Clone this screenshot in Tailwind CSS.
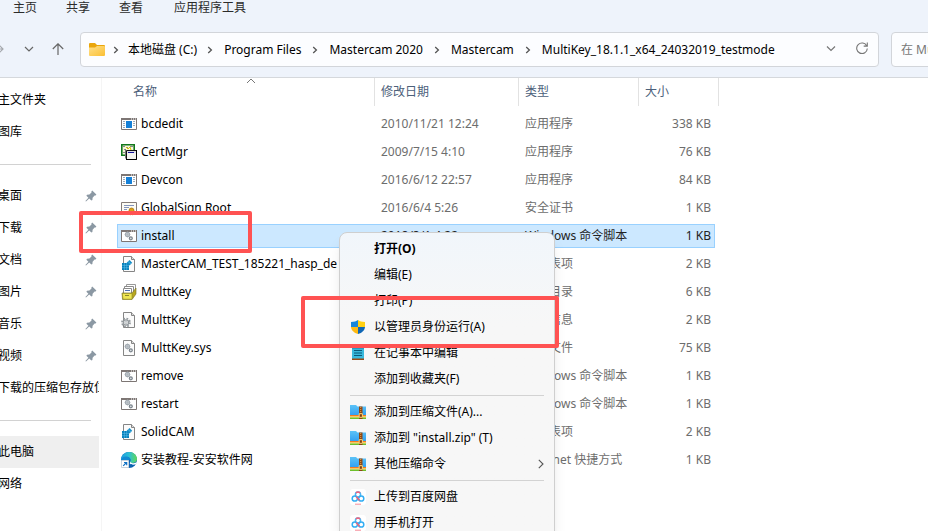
<!DOCTYPE html>
<html lang="zh-CN">
<head>
<meta charset="utf-8">
<title>MultiKey_18.1.1_x64_24032019_testmode</title>
<script src="https://cdn.jsdelivr.net/npm/@tailwindcss/browser@4"></script>
</head>
<body class="font-['Noto_Sans','Noto_Sans_CJK_SC',sans-serif] text-xs text-black bg-white">
<svg class="absolute size-0" aria-hidden="true">
  <defs>
    <linearGradient id="gFolder" x1="0" y1="0" x2="1" y2="1"><stop offset="0" stop-color="#ffe08a"/><stop offset="1" stop-color="#fbbf33"/></linearGradient>
    <linearGradient id="gZip" x1="0" y1="0" x2="0" y2="1"><stop offset="0" stop-color="#5cc3f7"/><stop offset="1" stop-color="#2f9df0"/></linearGradient>
    <linearGradient id="gEdge" x1="0" y1="0" x2="1" y2="0"><stop offset="0" stop-color="#1b9de2"/><stop offset=".5" stop-color="#2cc0d4"/><stop offset="1" stop-color="#62d957"/></linearGradient>
    <symbol id="chev" viewBox="0 0 6 8"><path d="M1.2 1 4.4 4 1.2 7" fill="none" stroke="#555" stroke-width="1.3"/></symbol>
    <symbol id="pin" viewBox="0 0 12 12"><path d="M7.2.6 11.4 4.4 10.6 5.6 9.6 5.5 7.6 7.8 7.4 10 6.4 10.6 4.2 8.6 1 11.6.4 11 3.4 7.8 1.4 5.8 2 4.8 4.4 4.6 6.5 2.5 6.4 1.4Z" fill="#8b98a3"/></symbol>
    <symbol id="app" viewBox="0 0 16 16"><path d="M.5 2.500h15v11H.5z" fill="#fff" stroke="#7d7674"/><path d="M0 2h16v2H0z" fill="#7d7674"/><path d="M10 3h1M12 3h1M14 3h1" stroke="#fff"/><path d="M5 5h6v7H5z" fill="#1580d8"/><path d="M2 5.500h2M2 7.500h2M2 9.500h2M2 11.500h2M12 5.500h2M12 7.500h2M12 9.500h2" stroke="#9cabb8"/></symbol>
    <symbol id="cert" viewBox="0 0 16 16"><path d="M.8.8h12.400v10.400H.8z" fill="#f6f6d8" stroke="#11771c" stroke-width="1.600"/><path d="M2 2.500h2M5 3.500h2M9 2.500h3M3 5.500h2M2 8.500h2" stroke="#888"/><path d="M5 3l2 2 2-2 1 3" stroke="#d9c400" fill="none"/><path d="M5.500 6.500h10v9h-10z" fill="#f4f4f0" stroke="#111"/><path d="M6 7h9v2H6z" fill="#dcdce4"/><path d="M7 8.500h6" stroke="#14149a"/><path d="M15.500 6v9.500H5" stroke="#000" fill="none"/><path d="M4.500 5v9.500" stroke="#777"/></symbol>
    <symbol id="security" viewBox="0 0 16 16"><path d="M.5 2.500h15v11H.5z" fill="#fdfcf4" stroke="#857d79"/><path d="M3 5.500h10M3 7.500h5M3 9.500h3" stroke="#8495bd"/><circle cx="10.500" cy="10.500" r="2.500" fill="#dda016" stroke="#a06d00" stroke-width=".7"/><path d="M9 12.500v3l1.500-1 1.500 1v-3" fill="#d7a125"/></symbol>
    <symbol id="gears" viewBox="0 0 16 16"><circle cx="6.500" cy="6.500" r="2" fill="#e8ecef" stroke="#a3abb2" stroke-width="1.300"/><path d="M6.500 3.500v6M3.500 6.500h6" stroke="#a3abb2" stroke-width=".6"/><circle cx="9.800" cy="10.300" r="1.500" fill="#d8dde0" stroke="#7a838b" stroke-width="1.200"/></symbol>
    <symbol id="batch" viewBox="0 0 16 16"><path d="M.5 2.500h15v11H.5z" fill="#fff" stroke="#7d7674"/><path d="M0 2h16v2H0z" fill="#7d7674"/><path d="M10 3h1M12 3h1M14 3h1" stroke="#fff"/><use href="#gears"/></symbol>
    <symbol id="page" viewBox="0 0 16 16"><path d="M2.500.5h8l3 3v12h-11z" fill="#fbfbfb" stroke="#858585"/><path d="M10.500.5v3h3" fill="#ddd" stroke="#858585"/></symbol>
    <symbol id="reg" viewBox="0 0 16 16"><use href="#page"/><path d="M1 7h7v7H1z" fill="#087fba"/><path d="M1 9.400h7M1 11.700h7M3.400 7v7M5.700 7v7" stroke="#64c5ee" stroke-width=".5"/><path d="m8.500 4 2.700 2.800L8.500 9.500 5.700 6.800z" fill="#168dc7"/><path d="M7 5.400 10 8.200" stroke="#73cdf1" stroke-width=".6"/></symbol>
    <symbol id="catalog" viewBox="0 0 16 16"><path d="M5.500.5h9v8h-9z" fill="#fff" stroke="#999"/><path d="M3.500 2.500h9v7h-9z" fill="#fff" stroke="#8b8b8b"/><path d="M2.500 4.500h8v6h-8z" fill="#fff" stroke="#8b8b8b"/><path d="M4 6.500h5" stroke="#4e71b8"/><path d="M1 9h10l4-5v6l-4 5.500H1.500z" fill="#b7a61f" stroke="#77712a" stroke-width=".6"/><path d="M1.300 9.400h9.700v5.800H2z" fill="#eee552" stroke="#8b862c" stroke-width=".6"/><path d="M4 11.500h4" stroke="#8b862c"/></symbol>
    <symbol id="inf" viewBox="0 0 16 16"><use href="#page"/><circle cx="5" cy="10.500" r="4" fill="none" stroke="#949a9e" stroke-width="1.800" stroke-dasharray="1.700 1.440"/><circle cx="5" cy="10.500" r="2.700" fill="#e8eaeb" stroke="#949a9e" stroke-width="1.200"/><circle cx="5" cy="10.500" r="1" fill="#fff" stroke="#949a9e" stroke-width=".6"/></symbol>
    <symbol id="sys" viewBox="0 0 16 16"><use href="#page"/><use href="#gears"/></symbol>
    <symbol id="edge" viewBox="0 0 16 16"><circle cx="8" cy="8" r="8" fill="#0b61b0"/><path d="M0 7C.5 3 4 0 8 0c5 0 8 3.500 8 7 0 3-2.500 4.200-5 4-2 0-2-1-1.500-2C10 7 8.500 5 6 5 3 5 1 6 0 9z" fill="url(#gEdge)"/><path d="M0 8c1-3 3.500-4 6-3.500C8 5 9.500 6 9.500 8 7 7 6 10 7 12l-7 0z" fill="#128ad2"/><path d="M9.700 9c-.7 1.500 1 2.500 3 2.200 1.500-.2 2.500-.7 3.300-1.500l-.8 2.300c-2 1-5 1-6.500-.5z" fill="#fff"/><path d="M.5 8.500h7v7h-7z" fill="#fff" stroke="#c9d3dc"/><path d="M2.200 13.800 5.500 10.500M3 10.500h2.700v2.700" fill="none" stroke="#1272c4" stroke-width="1.200"/></symbol>
    <symbol id="shield" viewBox="0 0 14 14"><path d="M7 0C5.500 1.200 3 2 0 2v5h7z" fill="#1485dc"/><path d="M7 0c1.500 1.200 4 2 7 2v5H7z" fill="#ffd013"/><path d="M0 7c.3 3.500 3 5.800 7 7V7z" fill="#fdb913"/><path d="M14 7c-.3 3.500-3 5.800-7 7V7z" fill="#0f67b5"/></symbol>
    <symbol id="notepad" viewBox="0 0 14 14"><path d="M1 1h12v12H1z" fill="#39b9dc"/><path d="M1 1h12v1.500H1z" fill="#197fa8"/><path d="M3 4.500h8M3 7h8M3 9.500h8" stroke="#0b5878"/><path d="M1 12.500h12V14H1z" fill="#9a4a13"/></symbol>
    <symbol id="zip" viewBox="0 0 16 14"><path d="M0 0h6l1.500 1.500H16V11H0z" fill="url(#gZip)"/><path d="M0 10h16v1.500H0z" fill="#f47b20"/><path d="M0 11.500h16V12.500H0z" fill="#ffd23a"/><path d="M0 12.500h16V14H0z" fill="#6dbf2b"/><path d="M9 1.500h3.500V14H9z" fill="#8d4513"/><path d="M10.700 2v7" stroke="#e6a24b" stroke-dasharray="1 1"/><path d="M9.200 8.700h3.200v3.600H9.200z" fill="#7a3d12" stroke="#ffd87a"/></symbol>
    <symbol id="pan" viewBox="0 0 16 16"><rect width="16" height="16" rx="3" fill="#fff"/><circle cx="8" cy="5.500" r="2.600" fill="none" stroke="#4cb7f5" stroke-width="1.500"/><path d="M6 4a2.600 2.600 0 0 1 4 0" fill="none" stroke="#f2617a" stroke-width="1.500"/><circle cx="4.800" cy="9.500" r="2.600" fill="none" stroke="#33aef3" stroke-width="1.500"/><circle cx="11.200" cy="9.500" r="2.600" fill="none" stroke="#33aef3" stroke-width="1.500"/><path d="M6.300 7.400 9.600 11.400" stroke="#f2617a" stroke-width="1.500"/><path d="M5 15.200h6" stroke="#f58a97"/></symbol>
  </defs>
</svg>

<div class="relative flex h-screen flex-col overflow-hidden">
  <header class="border-b border-[#d5d8dc] bg-[#eef3fb]">
    <nav class="flex h-8 gap-[29px] pl-[13px] text-[#2b2b2b]">
      <button class="h-4 leading-4">主页</button>
      <button class="h-4 leading-4">共享</button>
      <button class="h-4 leading-4">查看</button>
      <button class="ml-0.5 h-4 leading-4">应用程序工具</button>
    </nav>
    <div class="flex h-[45px] items-start">
      <div class="flex h-[34px] w-20 shrink-0 items-center">
        <button aria-label="前进" class="-ml-2"><svg class="size-3" viewBox="0 0 12 12"><path d="M0 6h11M6.500 1.500 11 6l-4.500 4.500" fill="none" stroke="#a5a8ad" stroke-width="1.200"/></svg></button>
        <button aria-label="最近" class="ml-5"><svg class="h-2 w-2.5" viewBox="0 0 10 8"><path d="m1 2 4 4 4-4" fill="none" stroke="#666" stroke-width="1.200"/></svg></button>
        <button aria-label="上移" class="ml-[18px]"><svg class="size-3" viewBox="0 0 12 12"><path d="M6 12V.8M.8 6 6 .8 11.200 6" fill="none" stroke="#666" stroke-width="1.200"/></svg></button>
      </div>
      <div class="flex h-[35px] grow items-center rounded border border-[#d2d5da] bg-[#fcfdff] pl-2">
        <svg class="h-[13px] w-4" viewBox="0 0 16 13"><path d="M0 1q0-1 1-1h5l2 2h7q1 0 1 1v3H0z" fill="#eaa60c"/><path d="M0 4.500h6L8 3h7q1 0 1 1v8q0 1-1 1H1q-1 0-1-1z" fill="url(#gFolder)"/></svg>
        <svg class="mr-[9px] ml-2 h-2 w-1.5"><use href="#chev"/></svg>
        <a href="#">本地磁盘 (C:)</a>
        <svg class="mr-[11px] ml-2.5 h-2 w-1.5"><use href="#chev"/></svg>
        <a href="#">Program Files</a>
        <svg class="mx-[11px] h-2 w-1.5"><use href="#chev"/></svg>
        <a href="#">Mastercam 2020</a>
        <svg class="mx-[11px] h-2 w-1.5"><use href="#chev"/></svg>
        <a href="#">Mastercam</a>
        <svg class="mx-[11px] h-2 w-1.5"><use href="#chev"/></svg>
        <a href="#">MultiKey_18.1.1_x64_24032019_testmode</a>
        <button aria-label="历史" class="ml-auto"><svg class="h-2 w-2.5" viewBox="0 0 10 8"><path d="m1 .5 4 4 4-4" fill="none" stroke="#777" stroke-width="1.200"/></svg></button>
        <button aria-label="刷新" class="mr-2.5 mb-1 ml-5"><svg class="size-3" viewBox="0 0 12 12"><path d="M10.800 4A5.300 5.300 0 1 0 11.300 6.500M11.300.5v3.600H7.700" fill="none" stroke="#777" stroke-width="1.100"/></svg></button>
      </div>
      <div class="ml-3 w-[37px] shrink-0">
        <input aria-label="搜索" placeholder="在 Mu" class="h-[35px] w-48 rounded border border-[#d2d5da] bg-[#fcfdff] pl-[9px] text-xs placeholder:text-[#777]">
      </div>
    </div>
  </header>

  <main class="flex min-h-0 grow">
    <aside class="w-[102px] shrink-0 overflow-hidden border-r border-[#f5f5f5] pt-1.5 pr-0.5">
      <ul class="leading-8 whitespace-nowrap">
        <li class="h-8"><a href="#" class="-ml-0.5">主文件夹</a></li>
        <li class="h-8"><a href="#" class="-ml-0.5">图库</a></li>
        <li class="flex h-8 items-center pr-2"><hr class="w-full border-[#d2d2d2]"></li>
        <li class="flex h-8 items-center justify-between pr-0.5"><a href="#" class="-ml-0.5">桌面</a><svg class="size-3"><use href="#pin"/></svg></li>
        <li class="flex h-8 items-center justify-between pr-0.5"><a href="#" class="-ml-0.5">下载</a><svg class="size-3"><use href="#pin"/></svg></li>
        <li class="flex h-8 items-center justify-between pr-0.5"><a href="#" class="-ml-0.5">文档</a><svg class="size-3"><use href="#pin"/></svg></li>
        <li class="flex h-8 items-center justify-between pr-0.5"><a href="#" class="-ml-0.5">图片</a><svg class="size-3"><use href="#pin"/></svg></li>
        <li class="flex h-8 items-center justify-between pr-0.5"><a href="#" class="-ml-0.5">音乐</a><svg class="size-3"><use href="#pin"/></svg></li>
        <li class="flex h-8 items-center justify-between pr-0.5"><a href="#" class="-ml-0.5">视频</a><svg class="size-3"><use href="#pin"/></svg></li>
        <li class="h-8 overflow-hidden"><a href="#" class="-ml-0.5">下载的压缩包存放位</a></li>
        <li class="flex h-8 items-center pr-2"><hr class="w-full border-[#d2d2d2]"></li>
        <li class="h-8 bg-[#efefef]"><a href="#" class="-ml-0.5">此电脑</a></li>
        <li class="h-8"><a href="#" class="-ml-0.5">网络</a></li>
      </ul>
    </aside>

    <section class="relative grow">
      <svg class="absolute top-0 left-[144px] h-1.5 w-2.5" viewBox="0 0 10 6"><path d="m1 5 4-4 4 4" fill="none" stroke="#777"/></svg>
      <table class="ml-[15px] w-[602px] table-fixed border-separate border-spacing-0 whitespace-nowrap text-[#6d6d6d]">
        <colgroup><col class="w-[258px]"><col class="w-36"><col class="w-[120px]"><col class="w-20"></colgroup>
        <thead class="text-left text-[#4c607a]">
          <tr class="h-7">
            <th class="border-r border-[#e2e2e2] pl-4 font-normal">名称</th>
            <th class="border-r border-[#e2e2e2] pl-1.5 font-normal">修改日期</th>
            <th class="border-r border-[#e2e2e2] pl-1.5 font-normal">类型</th>
            <th class="border-r border-[#e2e2e2] pl-1.5 font-normal">大小</th>
          </tr>
          <tr class="h-1"></tr>
        </thead>
        <tbody>
          <tr class="h-7"><td><div class="flex items-center gap-1 pl-1 text-black"><svg class="size-4"><use href="#app"/></svg>bcdedit</div></td><td class="pl-1.5">2010/11/21 12:24</td><td class="pl-1.5">应用程序</td><td class="pr-2 text-right">338 KB</td></tr>
          <tr class="h-7"><td><div class="flex items-center gap-1 pl-1 text-black"><svg class="size-4"><use href="#cert"/></svg>CertMgr</div></td><td class="pl-1.5">2009/7/15 4:10</td><td class="pl-1.5">应用程序</td><td class="pr-2 text-right">76 KB</td></tr>
          <tr class="h-7"><td><div class="flex items-center gap-1 pl-1 text-black"><svg class="size-4"><use href="#app"/></svg>Devcon</div></td><td class="pl-1.5">2016/6/12 22:57</td><td class="pl-1.5">应用程序</td><td class="pr-2 text-right">84 KB</td></tr>
          <tr class="h-7"><td><div class="flex items-center gap-1 pl-1 text-black"><svg class="size-4"><use href="#security"/></svg>GlobalSign Root</div></td><td class="pl-1.5">2016/6/4 5:26</td><td class="pl-1.5">安全证书</td><td class="pr-2 text-right">1 KB</td></tr>
          <tr class="h-7 text-[#222]">
            <td><div class="flex h-6 items-center gap-1 border-y border-l border-[#99d1ff] bg-[#cce8ff] pl-[3px] text-black"><svg class="size-4"><use href="#batch"/></svg>install</div></td>
            <td><div class="h-6 border-y border-[#99d1ff] bg-[#cce8ff] pl-1.5 leading-[22px]">2018/3/1 4:22</div></td>
            <td><div class="h-6 border-y border-[#99d1ff] bg-[#cce8ff] pl-1.5 leading-[22px]">Windows 命令脚本</div></td>
            <td><div class="mr-1 h-6 border-y border-r border-[#99d1ff] bg-[#cce8ff] pr-[3px] text-right leading-[22px]">1 KB</div></td>
          </tr>
          <tr class="h-7"><td><div class="flex items-center gap-1 pl-1 text-black"><svg class="size-4 shrink-0"><use href="#reg"/></svg>MasterCAM_TEST_185221_hasp_de</div></td><td></td><td class="pl-1.5">注册表项</td><td class="pr-2 text-right">2 KB</td></tr>
          <tr class="h-7"><td><div class="flex items-center gap-1 pl-1 text-black"><svg class="size-4"><use href="#catalog"/></svg>MulttKey</div></td><td></td><td class="pl-1.5">安全目录</td><td class="pr-2 text-right">6 KB</td></tr>
          <tr class="h-7"><td><div class="flex items-center gap-1 pl-1 text-black"><svg class="size-4"><use href="#inf"/></svg>MulttKey</div></td><td></td><td class="pl-1.5">安装信息</td><td class="pr-2 text-right">2 KB</td></tr>
          <tr class="h-7"><td><div class="flex items-center gap-1 pl-1 text-black"><svg class="size-4"><use href="#sys"/></svg>MulttKey.sys</div></td><td></td><td class="pl-1.5">系统文件</td><td class="pr-2 text-right">75 KB</td></tr>
          <tr class="h-7"><td><div class="flex items-center gap-1 pl-1 text-black"><svg class="size-4"><use href="#batch"/></svg>remove</div></td><td></td><td class="pl-1.5">Windows 命令脚本</td><td class="pr-2 text-right">1 KB</td></tr>
          <tr class="h-7"><td><div class="flex items-center gap-1 pl-1 text-black"><svg class="size-4"><use href="#batch"/></svg>restart</div></td><td></td><td class="pl-1.5">Windows 命令脚本</td><td class="pr-2 text-right">1 KB</td></tr>
          <tr class="h-7"><td><div class="flex items-center gap-1 pl-1 text-black"><svg class="size-4"><use href="#reg"/></svg>SolidCAM</div></td><td></td><td class="pl-1.5">注册表项</td><td class="pr-2 text-right">2 KB</td></tr>
          <tr class="h-7"><td><div class="flex items-center gap-1 pl-1 text-black"><svg class="size-4"><use href="#edge"/></svg>安装教程-安安软件网</div></td><td></td><td class="pl-1.5">Internet 快捷方式</td><td class="pr-2 text-right">1 KB</td></tr>
        </tbody>
      </table>
    </section>
  </main>

  <div role="menu" class="absolute top-[232px] left-[339px] w-[216px] rounded-t-lg border border-[#cfcfcf] bg-linear-to-b from-[#f1f6fb] to-[#f7f7f7] to-30% pt-[3px] shadow-lg">
    <button role="menuitem" class="flex h-[26px] w-full items-center pl-[34px] font-bold">打开(O)</button>
    <button role="menuitem" class="flex h-[26px] w-full items-center pl-[34px]">编辑(E)</button>
    <button role="menuitem" class="flex h-[26px] w-full items-center pl-[34px]">打印(P)</button>
    <button role="menuitem" class="flex h-[26px] w-full items-center gap-2 pl-2.5"><span class="flex w-4 justify-center"><svg class="size-3.5"><use href="#shield"/></svg></span>以管理员身份运行(A)</button>
    <button role="menuitem" class="flex h-[26px] w-full items-center gap-2 pl-2.5"><span class="flex w-4 justify-center"><svg class="size-3.5"><use href="#notepad"/></svg></span>在记事本中编辑</button>
    <button role="menuitem" class="flex h-[26px] w-full items-center pl-[34px]">添加到收藏夹(F)</button>
    <hr class="mx-2.5 my-[3px] border-[#d3d3d3]">
    <button role="menuitem" class="flex h-[26px] w-full items-center gap-2 pl-2.5"><svg class="h-3.5 w-4"><use href="#zip"/></svg>添加到压缩文件(A)...</button>
    <button role="menuitem" class="flex h-[26px] w-full items-center gap-2 pl-2.5"><svg class="h-3.5 w-4"><use href="#zip"/></svg>添加到 "install.zip" (T)</button>
    <button role="menuitem" class="flex h-[26px] w-full items-center gap-2 pr-2.5 pl-2.5"><svg class="h-3.5 w-4"><use href="#zip"/></svg>其他压缩命令<svg class="ml-auto h-2.5 w-1.5" viewBox="0 0 6 10"><path d="m.8.8 4.200 4.200L.8 9.200" fill="none" stroke="#555" stroke-width="1.100"/></svg></button>
    <hr class="mx-2.5 my-[3px] border-[#d3d3d3]">
    <button role="menuitem" class="flex h-[26px] w-full items-center gap-2 pl-2.5"><svg class="size-4"><use href="#pan"/></svg>上传到百度网盘</button>
    <button role="menuitem" class="flex h-[26px] w-full items-center gap-2 pl-2.5"><svg class="size-4"><use href="#pan"/></svg>用手机打开</button>
  </div>

  <div class="pointer-events-none absolute top-[211px] left-[79px] h-[42px] w-[173px] rounded-xs border-4 border-[#ff5252]"></div>
  <div class="pointer-events-none absolute top-[296px] left-[301px] h-[52px] w-[258px] rounded-xs border-4 border-[#ff5252]"></div>
</div>
</body>
</html>
